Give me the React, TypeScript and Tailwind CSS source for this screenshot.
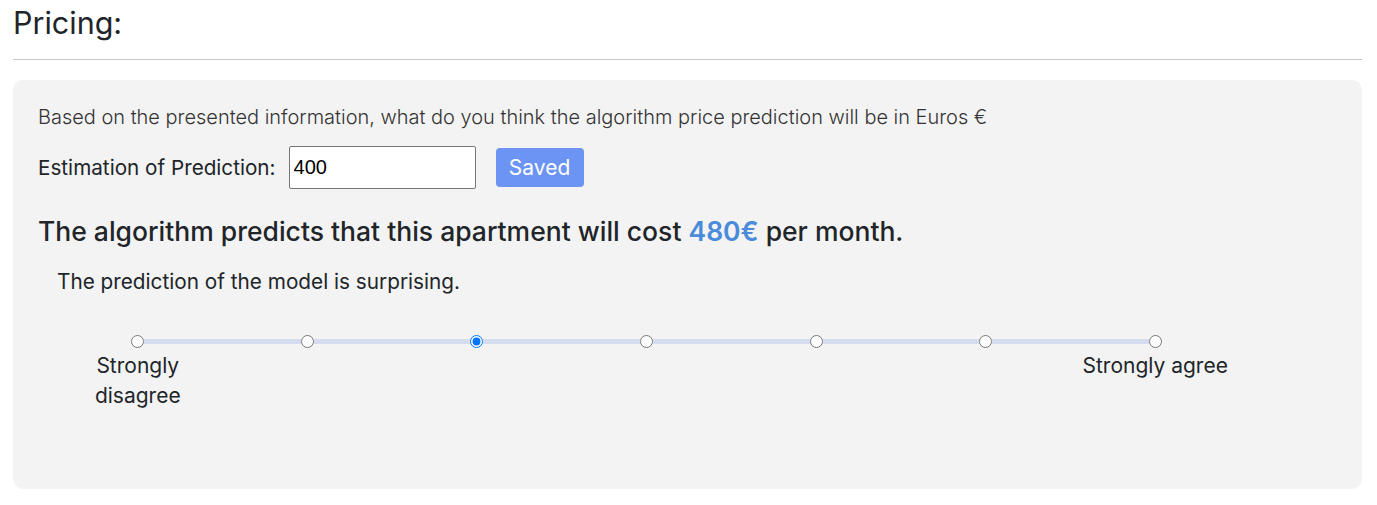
import React from "react";

const points = [0, 1, 2, 3, 4, 5, 6];

export default function App() {
  return (
    <div className="min-h-[505px] bg-white pl-[13px] pr-[15px] font-['Inter',_'Noto_Sans',_sans-serif] text-[#212529]">
      <h2 className="text-[30.5px] font-normal leading-[46px]">Pricing:</h2>
      <hr className="mt-[13px] border-0 border-t border-[#c8c8c8]" />
      <div className="mt-[20px] rounded-[10px] bg-[#f3f3f3] pb-[78px] pl-[25px] pr-[25px] pt-[25px]">
        <p className="text-[19.98px] font-light leading-[24px] text-[#333]">
          Based on the presented information, what do you think the algorithm price prediction will be in Euros €
        </p>
        <div className="mt-[17px] flex h-[43px] items-center">
          <span className="text-[20.7px] leading-[28px]">Estimation of Prediction:</span>
          <input
            className="ml-[13px] h-[43px] w-[187px] rounded-[2px] border border-[#767676] bg-white px-[4px] font-['Liberation_Sans',_Arial,_sans-serif] text-[20px] text-black"
            defaultValue="400"
          />
          <button className="ml-[20px] h-[39px] w-[88px] rounded-[4px] bg-[#6c94f4] text-[21px] leading-[39px] text-white">
            Saved
          </button>
        </div>
        <h3 className="mt-[24px] text-[26.5px] font-medium leading-[36px] text-[#212529]">
          The algorithm predicts that this apartment will cost{" "}
          <span className="font-semibold text-[#4a8bdb]">480€</span> per month.
        </h3>
        <p className="ml-[19px] mt-[18px] text-[20.75px] leading-[30px]">The prediction of the model is surprising.</p>
        <div className="ml-[15px] mt-[38px] grid w-[1187px] grid-cols-7">
          {points.map((i) => (
            <div key={i} className="flex flex-col items-center">
              <div className="flex h-[13px] w-full items-center">
                <div className={i === 0 ? "h-[5px] flex-1" : "h-[5px] flex-1 bg-[#d5dcef]"} />
                <input
                  type="radio"
                  name="surprising"
                  defaultChecked={i === 2}
                  className="m-0 h-[13px] w-[13px] shrink-0"
                />
                <div className={i === 6 ? "h-[5px] flex-1" : "h-[5px] flex-1 bg-[#d5dcef]"} />
              </div>
              <div className="mt-[3px] w-[150px] text-center text-[21px] leading-[30px]">
                {i === 0 ? "Strongly disagree" : i === 6 ? "Strongly agree" : ""}
              </div>
            </div>
          ))}
        </div>
      </div>
    </div>
  );
}
